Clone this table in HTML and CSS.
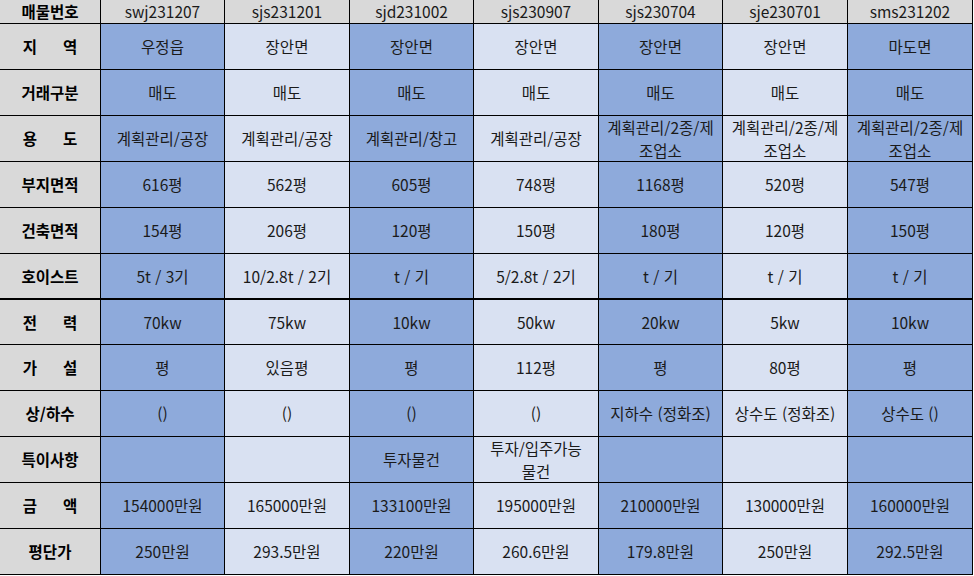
FILE: index.html
```html
<!DOCTYPE html>
<html lang="ko">
<head>
<meta charset="utf-8">
<title>매물 목록</title>
<link rel="stylesheet" href="styles.css">
</head>
<body>
<div class="sheet">
  <div class="c lbl">매물번호</div>
  <div class="c hd">swj231207</div>
  <div class="c hd">sjs231201</div>
  <div class="c hd">sjd231002</div>
  <div class="c hd">sjs230907</div>
  <div class="c hd">sjs230704</div>
  <div class="c hd">sje230701</div>
  <div class="c hd">sms231202</div>

  <div class="c lbl sp"><span>지</span><span>역</span></div>
  <div class="c dk">우정읍</div>
  <div class="c lt">장안면</div>
  <div class="c dk">장안면</div>
  <div class="c lt">장안면</div>
  <div class="c dk">장안면</div>
  <div class="c lt">장안면</div>
  <div class="c dk">마도면</div>

  <div class="c lbl">거래구분</div>
  <div class="c dk">매도</div>
  <div class="c lt">매도</div>
  <div class="c dk">매도</div>
  <div class="c lt">매도</div>
  <div class="c dk">매도</div>
  <div class="c lt">매도</div>
  <div class="c dk">매도</div>

  <div class="c lbl sp"><span>용</span><span>도</span></div>
  <div class="c dk">계획관리/공장</div>
  <div class="c lt">계획관리/공장</div>
  <div class="c dk">계획관리/창고</div>
  <div class="c lt">계획관리/공장</div>
  <div class="c dk">계획관리/2종/제<br>조업소</div>
  <div class="c lt">계획관리/2종/제<br>조업소</div>
  <div class="c dk">계획관리/2종/제<br>조업소</div>

  <div class="c lbl">부지면적</div>
  <div class="c dk">616평</div>
  <div class="c lt">562평</div>
  <div class="c dk">605평</div>
  <div class="c lt">748평</div>
  <div class="c dk">1168평</div>
  <div class="c lt">520평</div>
  <div class="c dk">547평</div>

  <div class="c lbl">건축면적</div>
  <div class="c dk">154평</div>
  <div class="c lt">206평</div>
  <div class="c dk">120평</div>
  <div class="c lt">150평</div>
  <div class="c dk">180평</div>
  <div class="c lt">120평</div>
  <div class="c dk">150평</div>

  <div class="c lbl thick">호이스트</div>
  <div class="c dk thick">5t / 3기</div>
  <div class="c lt thick">10/2.8t / 2기</div>
  <div class="c dk thick">t / 기</div>
  <div class="c lt thick">5/2.8t / 2기</div>
  <div class="c dk thick">t / 기</div>
  <div class="c lt thick">t / 기</div>
  <div class="c dk thick">t / 기</div>

  <div class="c lbl sp"><span>전</span><span>력</span></div>
  <div class="c dk">70kw</div>
  <div class="c lt">75kw</div>
  <div class="c dk">10kw</div>
  <div class="c lt">50kw</div>
  <div class="c dk">20kw</div>
  <div class="c lt">5kw</div>
  <div class="c dk">10kw</div>

  <div class="c lbl sp"><span>가</span><span>설</span></div>
  <div class="c dk">평</div>
  <div class="c lt">있음평</div>
  <div class="c dk">평</div>
  <div class="c lt">112평</div>
  <div class="c dk">평</div>
  <div class="c lt">80평</div>
  <div class="c dk">평</div>

  <div class="c lbl">상/하수</div>
  <div class="c dk">()</div>
  <div class="c lt">()</div>
  <div class="c dk">()</div>
  <div class="c lt">()</div>
  <div class="c dk">지하수 (정화조)</div>
  <div class="c lt">상수도 (정화조)</div>
  <div class="c dk">상수도 ()</div>

  <div class="c lbl">특이사항</div>
  <div class="c dk"></div>
  <div class="c lt"></div>
  <div class="c dk">투자물건</div>
  <div class="c lt">투자/입주가능<br>물건</div>
  <div class="c dk"></div>
  <div class="c lt"></div>
  <div class="c dk"></div>

  <div class="c lbl sp"><span>금</span><span>액</span></div>
  <div class="c dk">154000만원</div>
  <div class="c lt">165000만원</div>
  <div class="c dk">133100만원</div>
  <div class="c lt">195000만원</div>
  <div class="c dk">210000만원</div>
  <div class="c lt">130000만원</div>
  <div class="c dk">160000만원</div>

  <div class="c lbl">평단가</div>
  <div class="c dk">250만원</div>
  <div class="c lt">293.5만원</div>
  <div class="c dk">220만원</div>
  <div class="c lt">260.6만원</div>
  <div class="c dk">179.8만원</div>
  <div class="c lt">250만원</div>
  <div class="c dk">292.5만원</div>
</div>
</body>
</html>
```

FILE: styles.css
```css
html, body {
  margin: 0;
  padding: 0;
  background: #ffffff;
}

.sheet {
  display: grid;
  grid-template-columns: 100px 123px 124px 123px 124px 123px 124px 124px;
  grid-template-rows: 23px repeat(6, 45px) 44px repeat(5, 45px);
  gap: 1px;
  padding: 0 1px 1px 0;
  width: max-content;
  background: #000000;
  font-family: "Noto Sans CJK KR", "Noto Sans", sans-serif;
  font-size: 15.5px;
  color: #1a1a1a;
}

.c {
  display: flex;
  align-items: center;
  justify-content: center;
  text-align: center;
  line-height: 23px;
  box-sizing: border-box;
  white-space: nowrap;
}

.lbl {
  background: #d9d9d9;
  font-weight: 700;
  color: #000000;
}

.sp {
  gap: 26px;
}

.hd {
  background: #d9d9d9;
}

.dk {
  background: #8eaadb;
}

.lt {
  background: #d9e1f2;
}

.thick {
  border-bottom: 1px solid #000000;
}
```
